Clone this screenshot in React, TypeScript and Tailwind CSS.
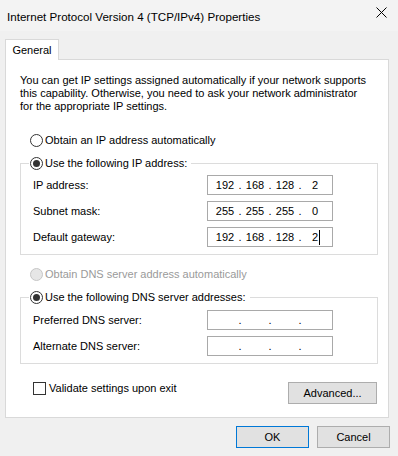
import React from 'react';

const Radio = ({ checked = false, disabled = false }: { checked?: boolean; disabled?: boolean }) => (
  <span
    className={
      'flex h-[13px] w-[13px] shrink-0 items-center justify-center rounded-full border ' +
      (disabled ? 'border-[#c6c6c6] bg-[#e6e6e6]' : 'border-[#333333] bg-white')
    }
  >
    {checked && <span className="h-[7px] w-[7px] rounded-full bg-[#333333]" />}
  </span>
);

const IpBox = ({ parts, caret = false }: { parts: string[]; caret?: boolean }) => (
  <div className="flex h-[20px] w-[126px] items-center border border-[#a9a9a9] bg-white pl-[6px]">
    {parts.map((p, i) => (
      <React.Fragment key={i}>
        <span className="relative w-[22px] text-center">
          {p}
          {caret && i === 3 && (
            <span className="absolute left-[15px] top-[-1px] h-[15px] w-px bg-black" />
          )}
        </span>
        {i < 3 && <span className="w-[8px] text-center">.</span>}
      </React.Fragment>
    ))}
  </div>
);

const Row = ({ label, parts, caret }: { label: string; parts: string[]; caret?: boolean }) => (
  <div className="flex items-center">
    <span className="w-[174px]">{label}</span>
    <IpBox parts={parts} caret={caret} />
  </div>
);

const empty = ['', '', '', ''];

export default function App() {
  return (
    <div className="flex h-[456px] w-[398px] flex-col overflow-hidden bg-[#f0f0f0] font-['Liberation_Sans',Arial,sans-serif] text-[11px] leading-[13px] text-black">
      {/* title bar */}
      <div className="flex h-[31px] shrink-0 items-center justify-between bg-[#f3f3f3] pl-[7px] pr-[11px] text-[11.6px]">
        <span className="mt-px">Internet Protocol Version 4 (TCP/IPv4) Properties</span>
        <svg width="11" height="11" viewBox="0 0 11 11" className="mb-[6px]">
          <path d="M0.5 0.5 L10.5 10.5 M10.5 0.5 L0.5 10.5" stroke="#000" strokeWidth="1" />
        </svg>
      </div>

      <div className="px-[5px] pt-[8px]">
        <div className="flex">
          <div className="relative z-10 -mb-px flex h-[21px] w-[54px] items-center justify-center border border-b-0 border-[#d9d9d9] bg-white">
            General
          </div>
        </div>

        <div className="h-[359px] w-[384px] border border-[#d9d9d9] bg-white pl-[14px] pr-[10px] pt-[14px]">
          <p>
            You can get IP settings assigned automatically if your network supports
            <br />
            this capability. Otherwise, you need to ask your network administrator
            <br />
            for the appropriate IP settings.
          </p>

          <label className="ml-[10px] mt-[20px] flex h-[15px] items-center gap-[2px]">
            <Radio />
            <span>Obtain an IP address automatically</span>
          </label>

          <fieldset className="mt-[8px] border border-[#dcdcdc] px-0 pb-[7px] pt-0">
            <legend className="ml-[8px] flex h-[15px] items-center gap-[2px] pl-px pr-[4px]">
              <Radio checked />
              <span>Use the following IP address:</span>
            </legend>
            <div className="flex flex-col gap-[6px] pl-[12px] pt-[4px]">
              <Row label="IP address:" parts={['192', '168', '128', '2']} />
              <Row label="Subnet mask:" parts={['255', '255', '255', '0']} />
              <Row label="Default gateway:" parts={['192', '168', '128', '2']} caret />
            </div>
          </fieldset>

          <label className="ml-[10px] mt-[12px] flex h-[15px] items-center gap-[2px] text-[#9a9a9a]">
            <Radio disabled />
            <span>Obtain DNS server address automatically</span>
          </label>

          <fieldset className="mt-[8px] border border-[#dcdcdc] px-0 pb-[7px] pt-0">
            <legend className="ml-[8px] flex h-[15px] items-center gap-[2px] pl-px pr-[4px]">
              <Radio checked />
              <span>Use the following DNS server addresses:</span>
            </legend>
            <div className="flex flex-col gap-[6px] pl-[12px] pt-[5px]">
              <Row label="Preferred DNS server:" parts={empty} />
              <Row label="Alternate DNS server:" parts={empty} />
            </div>
          </fieldset>

          <div className="mt-[18px] flex items-start justify-between pl-[13px] pr-px">
            <label className="flex h-[13px] items-center gap-[3px]">
              <span className="h-[13px] w-[13px] border border-[#333333] bg-white" />
              <span>Validate settings upon exit</span>
            </label>
            <button className="h-[22px] w-[89px] border border-[#adadad] bg-[#e1e1e1]">Advanced...</button>
          </div>
        </div>
      </div>

      <div className="flex justify-end gap-[8px] pr-[8px] pt-[8px]">
        <button className="h-[22px] w-[73px] border border-[#0078d7] bg-[#e1e1e1]">OK</button>
        <button className="h-[22px] w-[73px] border border-[#adadad] bg-[#e1e1e1]">Cancel</button>
      </div>
    </div>
  );
}
